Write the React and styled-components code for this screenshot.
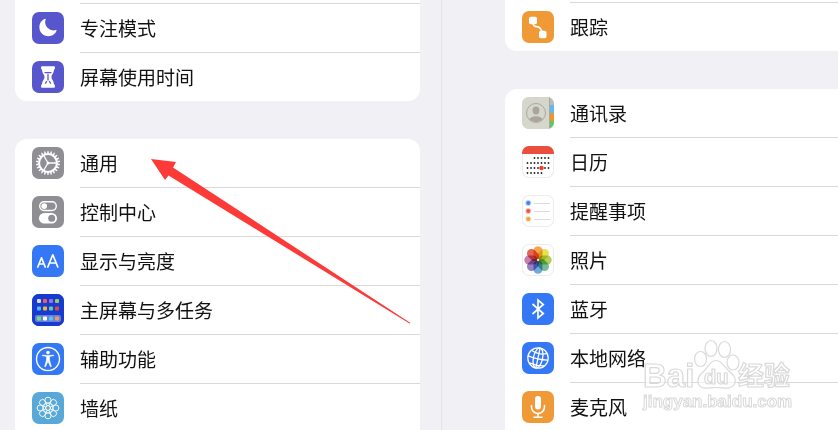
import React from 'react';
import styled, { createGlobalStyle } from 'styled-components';

const GlobalStyle = createGlobalStyle`
  *, *::before, *::after { box-sizing: border-box; }
  html, body { margin: 0; overflow: hidden; background: #f1f0f5; }
  body {
    font-family: "Noto Sans CJK SC", sans-serif;
    color: #111;
  }
`;

const Screen = styled.div`
  position: relative;
  display: grid;
  grid-template-columns: 442fr 396fr;
  min-height: 100vh;
`;

const Sidebar = styled.nav`
  display: flex;
  flex-direction: column;
  gap: 38px;
  padding: 0 21px 0 15px;
  border-right: 1px solid #e4e4e9;
`;

const Detail = styled.main`
  display: flex;
  flex-direction: column;
  gap: 38px;
  padding-left: 63px;
`;

const Card = styled.ul`
  list-style: none;
  margin: 0;
  padding: 0;
  background: #fff;
  border-radius: ${(p) => {
    const top = p.$openTop ? '0' : '12px';
    const bottom = p.$openBottom ? '0' : '12px';
    const right = p.$bleed ? '0' : null;
    return `${top} ${right ?? top} ${right ?? bottom} ${bottom}`;
  }};
`;

const Item = styled.li`
  display: flex;
`;

const RowButton = styled.button`
  display: flex;
  flex: 1;
  gap: 16px;
  padding: 0 0 0 17px;
  border: 0;
  background: none;
  color: inherit;
  font: inherit;
  text-align: left;
  cursor: pointer;
`;

const IconCell = styled.span`
  display: flex;
  align-items: center;
  height: 48px;
`;

const Tile = styled.span`
  display: block;
  width: 32px;
  height: 32px;
  border-radius: 7px;
  overflow: hidden;
  background: ${(p) => p.$color};
  box-shadow: ${(p) => (p.$outlined ? 'inset 0 0 0 1px #ececec' : 'none')};

  svg { display: block; width: 32px; height: 32px; }
`;

const Label = styled.span`
  flex: 1;
  min-height: 48px;
  font-size: 19px;
  line-height: 48px;
  white-space: nowrap;
  border-bottom: ${(p) => (p.$line ? '1px solid #d9d9db' : '0')};
`;

const CutRow = styled.li`
  height: ${(p) => p.$height}px;
  margin-left: 65px;
  border-bottom: 1px solid #d9d9db;
`;

const Petal = styled.rect`
  mix-blend-mode: multiply;
  opacity: 0.88;
`;

const Arrow = styled.svg`
  position: absolute;
  left: 151px;
  top: 159px;
  width: 262px;
  height: 167px;
  pointer-events: none;
`;

const Watermark = styled.svg`
  position: absolute;
  left: 640px;
  top: 336px;
  width: 160px;
  height: 80px;
  pointer-events: none;
`;

const range = (n) => Array.from({ length: n }, (_, i) => i);

const Moon = () => (
  <svg viewBox="0 0 32 32">
    <path fill="#fff" d="M13.7 7.3a.5.5 0 0 0-.7-.5A9 9 0 1 0 24.6 18.7c.2-.5-.2-.9-.7-.7A8.3 8.3 0 0 1 13.7 7.3Z" />
  </svg>
);

const Hourglass = () => (
  <svg viewBox="0 0 32 32">
    <path
      fill="#fff"
      d="M9.800 5.300h12.400q.7 0 .7.800v1.600q0 .8-.7.8h-.2c-.1 4-2.500 5-2.500 7.500s2.400 3.500 2.500 7.500h.2q.7 0 .7.8v1.600q0 .8-.7.8H9.800q-.7 0-.7-.8v-1.600q0-.8.7-.8h.2c.1-4 2.500-5 2.500-7.500s-2.400-3.500-2.500-7.500h-.2q-.7 0-.7-.8V6.100q0-.8.7-.8Z"
    />
    <path
      fill="none"
      stroke="#5856cc"
      strokeWidth="1.300"
      strokeLinecap="round"
      d="M13 11.700h6M16 13.500V19M14.500 20.500 13.500 22.300M17.500 20.500 18.500 22.300"
    />
  </svg>
);

const Gear = () => (
  <svg viewBox="0 0 32 32" fill="none" stroke="#fff">
    <circle cx="16" cy="16" r="8.900" strokeWidth="2" />
    {range(22).map((i) => (
      <path key={i} d="M15 6.500 15.500 3.900H16.500L17 6.500Z" fill="#fff" stroke="none" transform={`rotate(${(i * 360) / 22} 16 16)`} />
    ))}
    <path strokeWidth="1.300" d="M16 16H25M16 16 11.500 8.200M16 16 11.500 23.800" />
    <circle cx="16" cy="16" r="1.500" fill="#fff" stroke="none" />
  </svg>
);

const Toggles = () => (
  <svg viewBox="0 0 32 32">
    <rect x="7.700" y="5.700" width="16.600" height="8.800" rx="4.400" fill="none" stroke="#fff" strokeWidth="1.400" />
    <circle cx="12.200" cy="10.100" r="2.900" fill="#fff" />
    <rect x="7" y="17" width="18" height="10.400" rx="5.200" fill="#fff" />
    <circle cx="19.700" cy="22.200" r="3.500" fill="#8e8e93" />
  </svg>
);

const LetterSizes = () => (
  <svg viewBox="0 0 32 32" fill="none" stroke="#fff" strokeWidth="1.700" strokeLinecap="round" strokeLinejoin="round">
    <path d="M5.800 22 9.500 12.800 13.200 22M7 19H12M15.800 22 20.800 9.800 25.800 22M17.500 18H24" />
  </svg>
);

const appColors = [
  ['#d5d9df', '#ec5c62', '#a06cf2', '#9ccb52'],
  ['#57b5f0', '#f3b53d', '#68c9a8', '#e2473e'],
  ['#78df74', '#ffffff', '#5fc0f5', '#f1994e'],
];

const HomeGrid = () => (
  <svg viewBox="0 0 32 32">
    <rect width="32" height="32" fill="#173bce" />
    <rect x="3" y="21" width="26" height="7" rx="2" fill="#6580dc" />
    {appColors.map((row, r) =>
      row.map((c, i) => (
        <rect key={`${r}${i}`} x={5 + i * 6} y={[5, 12.500, 22.500][r]} width="4" height="4" rx="1" fill={c} />
      ))
    )}
  </svg>
);

const Accessibility = () => (
  <svg viewBox="0 0 32 32" fill="none" stroke="#fff">
    <circle cx="16" cy="16" r="11.500" strokeWidth="1.400" />
    <circle cx="16" cy="9.600" r="1.800" fill="#fff" stroke="none" />
    <path
      fill="#fff"
      strokeWidth=".6"
      strokeLinejoin="round"
      d="M10.200 12.600 14.500 13.500V17L12.700 23.500 13.500 23.800 16 18.300 18.500 23.800 19.300 23.500 17.500 17V13.500L21.800 12.600 21.700 12.100 16.800 12.500H15.200L10.300 12.100Z"
    />
  </svg>
);

const Flower = () => (
  <svg viewBox="0 0 32 32" fill="none" stroke="#fff" strokeWidth=".9">
    {range(8).map((i) => (
      <g key={i} transform={`rotate(${i * 45} 16 16)`}>
        <circle cx="16" cy="8.300" r="3.100" />
        <circle cx="16" cy="12.200" r="1.700" strokeWidth=".6" />
      </g>
    ))}
    <circle cx="16" cy="16" r="2.400" />
  </svg>
);

const Tracking = () => (
  <svg viewBox="0 0 32 32">
    <path fill="none" stroke="#fff" strokeWidth="1.600" d="M11 11C11 17 14 15 16.500 16S19 18.500 20.500 22" />
    <rect x="7" y="5.700" width="8" height="7.500" rx="1.800" fill="#fff" />
    <rect x="17" y="19.700" width="7.500" height="7.500" rx="1.800" fill="#fff" />
  </svg>
);

const Contacts = () => (
  <svg viewBox="0 0 32 32">
    <rect width="32" height="32" fill="#d5d7cd" />
    <path fill="#bcbdb6" d="M27 0h5v8h-5Z" />
    <path fill="#5fb9f4" d="M28 8h4v8h-4Z" />
    <path fill="#ee952e" d="M28 16h4v8h-4Z" />
    <path fill="#5bca60" d="M28 24h4v8h-4Z" />
    <path fill="#a7a9a1" d="M27 0h1v32h-1Z" />
    <clipPath id="contact-ring"><circle cx="14" cy="16" r="9" /></clipPath>
    <g fill="#a9a49c" clipPath="url(#contact-ring)">
      <ellipse cx="14" cy="13.500" rx="3.400" ry="4" />
      <ellipse cx="14" cy="24" rx="7" ry="4.800" />
    </g>
    <circle cx="14" cy="16" r="9.500" fill="none" stroke="#a9a7a0" strokeWidth="1" />
  </svg>
);

const Calendar = () => (
  <svg viewBox="0 0 32 32">
    <path fill="#ea4e3d" d="M0 0h32v8H0Z" />
    {[12, 17, 22, 27].map((y, r) =>
      range(7).map((i) =>
        (r === 0 && i < 2) || (r === 3 && i > 4) ? null : (
          <circle key={`${r}${i}`} cx={5.500 + i * 3.500} cy={y} r=".9" fill="#222" />
        )
      )
    )}
    <circle cx="19.500" cy="22" r="2.300" fill="#ea4335" />
  </svg>
);

const Reminders = () => (
  <svg viewBox="0 0 32 32">
    {['#3b82f6', '#ec5545', '#f2a33b'].map((c, i) => (
      <g key={c}>
        <circle cx="6.300" cy={8 + i * 8} r="3" fill={c} opacity=".35" />
        <circle cx="6.300" cy={8 + i * 8} r="2" fill={c} />
        <path d={`M12 ${8.500 + i * 8}H28`} stroke="#dcdcdc" />
      </g>
    ))}
  </svg>
);

const petals = ['#f19a38', '#e6dd38', '#a8c945', '#62b38a', '#5c9ed8', '#8a6fbb', '#c0719f', '#e2513f'];

const Photos = () => (
  <svg viewBox="0 0 32 32">
    {petals.map((c, i) => (
      <Petal key={c} x="11.500" y="2.300" width="9" height="13.200" rx="4.500" fill={c} transform={`rotate(${i * 45} 16 16)`} />
    ))}
    <circle cx="16" cy="16" r="1" fill="#fff" />
  </svg>
);

const Bluetooth = () => (
  <svg viewBox="0 0 32 32" fill="none" stroke="#fff" strokeWidth="1.700" strokeLinejoin="miter">
    <path d="M10.500 11 21.300 20.500 16 25V7L21.300 11.500 10.500 21" />
  </svg>
);

const Globe = () => (
  <svg viewBox="0 0 32 32" fill="none" stroke="#fff" strokeWidth="1.300">
    <circle cx="16" cy="16" r="10.200" />
    <g transform="rotate(12 16 16)">
      <ellipse cx="16" cy="16" rx="4.600" ry="10.200" />
      <path d="M16 6V26M6 16Q16 18 26 16M8.300 10Q16 13 23.700 10M8.500 22.500Q16 24 23.500 22.500" />
    </g>
  </svg>
);

const Microphone = () => (
  <svg viewBox="0 0 32 32" fill="none" stroke="#fff" strokeWidth="1.500" strokeLinecap="round">
    <rect x="13" y="5" width="6" height="13.500" rx="3" fill="#fff" stroke="none" />
    <path d="M9.500 14.500V16a6.500 6.500 0 0 0 13 0V14.500M16 22.500V26M12 26.200H20" />
  </svg>
);

const sidebarTop = [
  { label: '专注模式', color: '#5856cc', Icon: Moon },
  { label: '屏幕使用时间', color: '#5856cc', Icon: Hourglass },
];

const sidebarMain = [
  { label: '通用', color: '#8e8e93', Icon: Gear },
  { label: '控制中心', color: '#8e8e93', Icon: Toggles },
  { label: '显示与亮度', color: '#3478f6', Icon: LetterSizes },
  { label: '主屏幕与多任务', color: '#173bce', Icon: HomeGrid },
  { label: '辅助功能', color: '#3478f6', Icon: Accessibility },
  { label: '墙纸', color: '#59a9d8', Icon: Flower },
];

const detailTop = [{ label: '跟踪', color: '#f09a37', Icon: Tracking }];

const detailMain = [
  { label: '通讯录', color: '#d5d7cd', Icon: Contacts },
  { label: '日历', color: '#fff', Icon: Calendar, outlined: true },
  { label: '提醒事项', color: '#fff', Icon: Reminders, outlined: true },
  { label: '照片', color: '#fff', Icon: Photos, outlined: true },
  { label: '蓝牙', color: '#3478f6', Icon: Bluetooth },
  { label: '本地网络', color: '#3478f6', Icon: Globe },
  { label: '麦克风', color: '#f09a37', Icon: Microphone },
];

function Group({ items, cut = 0, openBottom = false, bleed = false }) {
  return (
    <Card $openTop={cut > 0} $openBottom={openBottom} $bleed={bleed}>
      {cut > 0 && <CutRow $height={cut} aria-hidden="true" />}
      {items.map(({ label, color, Icon, outlined }, i) => (
        <Item key={label}>
          <RowButton type="button">
            <IconCell aria-hidden="true">
              <Tile $color={color} $outlined={outlined}>
                <Icon />
              </Tile>
            </IconCell>
            <Label $line={openBottom || i < items.length - 1}>{label}</Label>
          </RowButton>
        </Item>
      ))}
    </Card>
  );
}

export default function App() {
  return (
    <>
      <GlobalStyle />
      <Screen>
        <Sidebar>
          <Group items={sidebarTop} cut={4} />
          <Group items={sidebarMain} openBottom />
        </Sidebar>
        <Detail>
          <Group items={detailTop} cut={3} bleed />
          <Group items={detailMain} openBottom bleed />
        </Detail>
        <Arrow viewBox="0 0 262 167" aria-hidden="true">
          <path fill="#fc3a38" d="M0 0 25 3 22 8.500 259.500 164 258.500 164.500 17.500 16.500 14 21Z" />
        </Arrow>
        <Watermark viewBox="0 0 160 80">
          <g fill="#fff" fillOpacity=".6" stroke="#d9d9d9" strokeWidth="1.200">
            <ellipse cx="60.500" cy="23" rx="6" ry="7.500" />
            <ellipse cx="71" cy="12.500" rx="6" ry="8" />
            <ellipse cx="84.500" cy="13.500" rx="6" ry="8" />
            <ellipse cx="93" cy="26.500" rx="6" ry="7.500" />
            <path d="M76 24.500C70 24.500 69 31 63 36C58 40 57 45 59 49C62 54 68 51.500 76 51.500S90 54 94 49C97 44 95 40 90 36C84 31 82 24.500 76 24.500Z" />
            <g fontFamily='"Liberation Sans", sans-serif' fontWeight="700">
              <text x="3" y="51" fontSize="33">Bai</text>
              <text x="64" y="48" fontSize="20">du</text>
              <text x="3" y="71" fontSize="17" strokeWidth="1">jingyan.baidu.com</text>
            </g>
            <text x="98" y="49" fontSize="26" fontWeight="700" fontFamily='"Noto Sans CJK SC", sans-serif'>经验</text>
          </g>
        </Watermark>
      </Screen>
    </>
  );
}
